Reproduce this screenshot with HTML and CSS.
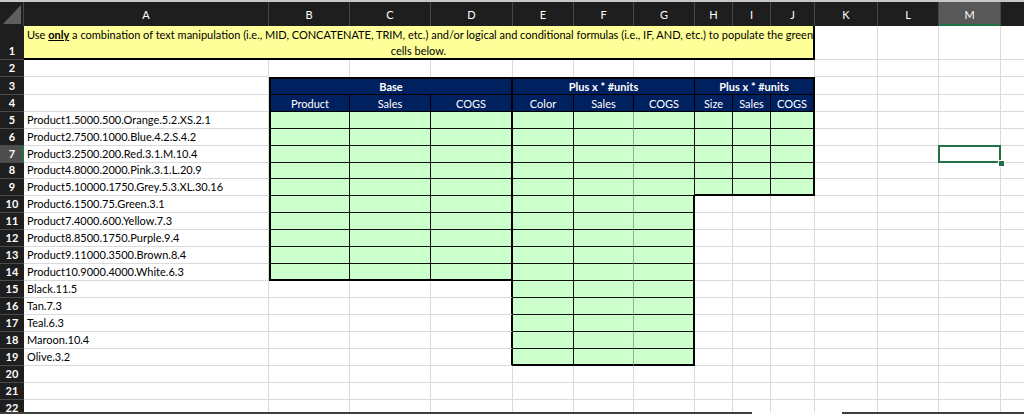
FILE: index.html
```html
<!DOCTYPE html>
<html lang="en">
<head>
<meta charset="utf-8">
<title>Sheet</title>
<link rel="stylesheet" href="styles.css">
</head>
<body>
<div class="topline"></div>
<div class="sheet">
  <div class="corner"><svg width="23" height="24" viewBox="0 0 23 24"><polygon points="3,22 21,3 21,22" fill="#5f5f5f"/></svg></div>
  <div class="ch">A</div><div class="ch">B</div><div class="ch">C</div><div class="ch">D</div><div class="ch">E</div><div class="ch">F</div><div class="ch">G</div><div class="ch">H</div><div class="ch">I</div><div class="ch">J</div><div class="ch">K</div><div class="ch">L</div><div class="ch on">M</div><div class="ch"></div>

  <div class="rh">1</div>
  <div class="note">Use <b><u>only</u></b> a combination of text manipulation (i.e., MID, CONCATENATE, TRIM, etc.) and/or logical and conditional formulas (i.e., IF, AND, etc.) to populate the green<br>cells below.</div>
  <div></div><div></div><div></div><div></div>

  <div class="rh">2</div><div></div>
  <div class="nb"></div><div class="nb"></div><div class="nb"></div><div class="nb"></div><div class="nb"></div><div class="nb"></div><div class="nb"></div><div class="nb"></div><div class="nb"></div>
  <div></div><div></div><div></div><div></div>

  <div class="rh">3</div><div></div>
  <div class="hd grp tp lt rt">Base</div>
  <div class="hd grp tp">Plus x * #units</div>
  <div class="hd grp tp rt">Plus x * #units</div>
  <div></div><div></div><div></div><div></div>

  <div class="rh">4</div><div></div>
  <div class="hd lt">Product</div><div class="hd">Sales</div><div class="hd rt">COGS</div>
  <div class="hd">Color</div><div class="hd">Sales</div><div class="hd">COGS</div>
  <div class="hd">Size</div><div class="hd">Sales</div><div class="hd rt">COGS</div>
  <div></div><div></div><div></div><div></div>

  <div class="rh">5</div><div>Product1.5000.500.Orange.5.2.XS.2.1</div>
  <div class="g lt"></div><div class="g"></div><div class="g rt"></div>
  <div class="g"></div><div class="g soft"></div><div class="g"></div>
  <div class="g"></div><div class="g"></div><div class="g rt"></div>
  <div></div><div></div><div></div><div></div>

  <div class="rh">6</div><div>Product2.7500.1000.Blue.4.2.S.4.2</div>
  <div class="g lt"></div><div class="g"></div><div class="g rt"></div>
  <div class="g"></div><div class="g soft"></div><div class="g"></div>
  <div class="g"></div><div class="g"></div><div class="g rt"></div>
  <div></div><div></div><div></div><div></div>

  <div class="rh on">7</div><div>Product3.2500.200.Red.3.1.M.10.4</div>
  <div class="g lt"></div><div class="g"></div><div class="g rt"></div>
  <div class="g"></div><div class="g soft"></div><div class="g"></div>
  <div class="g"></div><div class="g"></div><div class="g rt"></div>
  <div></div><div></div><div class="sel"></div><div></div>

  <div class="rh">8</div><div>Product4.8000.2000.Pink.3.1.L.20.9</div>
  <div class="g lt"></div><div class="g"></div><div class="g rt"></div>
  <div class="g"></div><div class="g soft"></div><div class="g"></div>
  <div class="g"></div><div class="g"></div><div class="g rt"></div>
  <div></div><div></div><div></div><div></div>

  <div class="rh">9</div><div>Product5.10000.1750.Grey.5.3.XL.30.16</div>
  <div class="g lt"></div><div class="g"></div><div class="g rt"></div>
  <div class="g"></div><div class="g soft"></div><div class="g"></div>
  <div class="g bt"></div><div class="g bt"></div><div class="g rt bt"></div>
  <div></div><div></div><div></div><div></div>

  <div class="rh">10</div><div>Product6.1500.75.Green.3.1</div>
  <div class="g lt"></div><div class="g"></div><div class="g rt"></div>
  <div class="g"></div><div class="g soft"></div><div class="g rt"></div>
  <div></div><div></div><div></div>
  <div></div><div></div><div></div><div></div>

  <div class="rh">11</div><div>Product7.4000.600.Yellow.7.3</div>
  <div class="g lt"></div><div class="g"></div><div class="g rt"></div>
  <div class="g"></div><div class="g soft"></div><div class="g rt"></div>
  <div></div><div></div><div></div>
  <div></div><div></div><div></div><div></div>

  <div class="rh">12</div><div>Product8.8500.1750.Purple.9.4</div>
  <div class="g lt"></div><div class="g"></div><div class="g rt"></div>
  <div class="g"></div><div class="g soft"></div><div class="g rt"></div>
  <div></div><div></div><div></div>
  <div></div><div></div><div></div><div></div>

  <div class="rh">13</div><div>Product9.11000.3500.Brown.8.4</div>
  <div class="g lt"></div><div class="g"></div><div class="g rt"></div>
  <div class="g"></div><div class="g soft"></div><div class="g rt"></div>
  <div></div><div></div><div></div>
  <div></div><div></div><div></div><div></div>

  <div class="rh">14</div><div>Product10.9000.4000.White.6.3</div>
  <div class="g lt bt"></div><div class="g bt"></div><div class="g rt bt"></div>
  <div class="g"></div><div class="g soft"></div><div class="g rt"></div>
  <div></div><div></div><div></div>
  <div></div><div></div><div></div><div></div>

  <div class="rh">15</div><div>Black.11.5</div>
  <div></div><div></div><div class="rt"></div>
  <div class="g"></div><div class="g soft"></div><div class="g rt"></div>
  <div></div><div></div><div></div>
  <div></div><div></div><div></div><div></div>

  <div class="rh">16</div><div>Tan.7.3</div>
  <div></div><div></div><div class="rt"></div>
  <div class="g"></div><div class="g soft"></div><div class="g rt"></div>
  <div></div><div></div><div></div>
  <div></div><div></div><div></div><div></div>

  <div class="rh">17</div><div>Teal.6.3</div>
  <div></div><div></div><div class="rt"></div>
  <div class="g"></div><div class="g soft"></div><div class="g rt"></div>
  <div></div><div></div><div></div>
  <div></div><div></div><div></div><div></div>

  <div class="rh">18</div><div>Maroon.10.4</div>
  <div></div><div></div><div class="rt"></div>
  <div class="g"></div><div class="g soft"></div><div class="g rt"></div>
  <div></div><div></div><div></div>
  <div></div><div></div><div></div><div></div>

  <div class="rh">19</div><div>Olive.3.2</div>
  <div></div><div></div><div class="rt"></div>
  <div class="g bt"></div><div class="g soft bt"></div><div class="g rt bt"></div>
  <div></div><div></div><div></div>
  <div></div><div></div><div></div><div></div>

  <div class="rh">20</div><div></div>
  <div></div><div></div><div></div><div></div><div></div><div></div><div></div><div></div><div></div>
  <div></div><div></div><div></div><div></div>

  <div class="rh">21</div><div></div>
  <div></div><div></div><div></div><div></div><div></div><div></div><div></div><div></div><div></div>
  <div></div><div></div><div></div><div></div>

  <div class="rh">22</div><div></div>
  <div></div><div></div><div></div><div></div><div></div><div></div><div></div><div></div><div></div>
  <div></div><div></div><div></div><div></div>
</div>
<div class="hbar"><span class="seg1"></span><span class="gap"></span><span class="seg2"></span></div>
</body>
</html>
```

FILE: styles.css
```css
* { box-sizing: border-box; }
html, body { margin: 0; padding: 0; }
body {
  width: 1024px;
  height: 414px;
  overflow: hidden;
  background: #fff;
  font-family: Lato, "Liberation Sans", sans-serif;
  font-size: 11px;
  color: #000;
  display: flex;
  flex-direction: column;
}
.topline { height: 2px; flex: none; background: #c8c8c8; }
.sheet {
  flex: 1;
  min-height: 0;
  overflow: hidden;
  display: grid;
  grid-template-columns: 24px 245px 81px 81px 82px 61px 60px 61px 38px 38px 44px 63px 61px 62px 40px;
  grid-template-rows: 24px 34px 17px 18px 17px 17px 17px 17px 16px 17px 17px 17px 17px 17px 17px 17px 17px 17px 17px 17px 17px 17px 17px;
}
.sheet > div {
  border-right: 1px solid #dadada;
  border-bottom: 1px solid #dadada;
  display: flex;
  align-items: flex-end;
  padding: 0 3px;
  line-height: 16px;
  white-space: nowrap;
  overflow: hidden;
  min-width: 0;
}
.sheet > .corner {
  background: #1e1e1e;
  border-right: 1px solid #464646;
  border-bottom: none;
  padding: 0;
  align-items: stretch;
}
.sheet > .ch {
  background: #1e1e1e;
  color: #fff;
  border-right: 1px solid #464646;
  border-bottom: none;
  justify-content: center;
  align-items: center;
  line-height: 15px;
}
.sheet > .ch.on {
  background: #585858;
  box-shadow: inset 0 -2px #217346;
}
.sheet > .rh {
  background: #1e1e1e;
  color: #fff;
  font-weight: bold;
  justify-content: center;
  border-right: none;
  border-bottom: 1px solid #4a4a4a;
  padding: 0;
}
.sheet > .rh.on {
  background: #4e4e4e;
  box-shadow: inset -2px 0 #217346;
}
.sheet > .note {
  grid-column: span 10;
  display: block;
  background: #ffff99;
  border-right: 2px solid #000;
  border-bottom: 2px solid #000;
  text-align: center;
  padding-top: 1px;
}
.sheet > .nb { border-bottom: none; }
.sheet > .hd {
  background: #002060;
  color: #fff;
  justify-content: center;
  align-items: center;
  line-height: 15px;
  border-right: 1px solid #000;
  border-bottom: 1px solid #000;
}
.sheet > .grp { grid-column: span 3; font-weight: bold; }
.sheet > .g {
  background: #ccffcc;
  border-right-color: #111;
  border-bottom-color: #111;
}
.sheet > .soft { border-right-color: #8fb08f; }
.sheet > .lt { border-left: 2px solid #000; }
.sheet > .rt { border-right: 2px solid #000; }
.sheet > .tp { border-top: 2px solid #000; }
.sheet > .bt { border-bottom: 2px solid #000; }
.sheet > .sel { position: relative; overflow: visible; }
.sel::after {
  content: "";
  position: absolute;
  left: -1px;
  top: -1px;
  width: 63px;
  height: 18px;
  border: 2px solid #217346;
  box-sizing: border-box;
  z-index: 2;
}
.sel::before {
  content: "";
  position: absolute;
  left: 59px;
  top: 14px;
  width: 5px;
  height: 5px;
  background: #217346;
  border: 1px solid #fff;
  z-index: 3;
}
.hbar { height: 2px; flex: none; display: flex; }
.hbar .seg1 { width: 752px; background: #3e3e3e; }
.hbar .gap { width: 90px; }
.hbar .seg2 { flex: 1; background: #3e3e3e; }
```
